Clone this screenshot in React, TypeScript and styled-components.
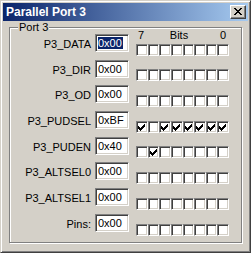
import React from "react";
import styled, { createGlobalStyle } from "styled-components";

const Global = createGlobalStyle`
  html, body { margin: 0; padding: 0; background: #d4d0c8; }
  body { font-family: "Liberation Sans", Arial, sans-serif; }
`;

const Window = styled.div`
  box-sizing: border-box;
  width: 251px;
  height: 253px;
  background: #d4d0c8;
  border: 1px solid;
  border-color: #d4d0c8 #404040 #404040 #d4d0c8;
  box-shadow: inset 1px 1px #ffffff, inset -1px -1px #808080;
  padding: 2px;
  display: flex;
  flex-direction: column;
`;

const TitleBar = styled.div`
  height: 18px;
  background: linear-gradient(to right, #0a246a, #a6caf0);
  display: flex;
  align-items: center;
  justify-content: space-between;
  padding: 0 2px 0 3px;
`;

const Title = styled.span`
  color: #ffffff;
  font: bold 12px "Liberation Sans", Arial, sans-serif;
  line-height: 18px;
`;

const CloseButton = styled.div`
  box-sizing: border-box;
  width: 16px;
  height: 14px;
  background: #d4d0c8;
  border: 1px solid;
  border-color: #ffffff #404040 #404040 #ffffff;
  box-shadow: inset -1px -1px #808080;
  display: flex;
  align-items: center;
  justify-content: center;
  padding: 0 1px 1px 0;
`;

const Body = styled.div`
  padding: 6px 6px 0 6px;
`;

const Group = styled.div`
  position: relative;
  box-sizing: border-box;
  width: 233px;
  height: 216px;
  border: 1px solid #808080;
  box-shadow: inset 1px 1px #ffffff, 1px 1px #ffffff;
  padding: 2px 0 0 0;
`;

const Caption = styled.span`
  position: absolute;
  top: -7px;
  left: 8px;
  padding: 0 1px;
  background: #d4d0c8;
  font-size: 11px;
  line-height: 13px;
  color: #000;
`;

const Grid = styled.div`
  display: grid;
  grid-template-columns: 81px 34px 96px;
  grid-auto-rows: 25.7px;
  column-gap: 4px;
`;

const Label = styled.div`
  font-size: 11px;
  line-height: 13px;
  color: #000;
  text-align: right;
  padding-top: 8px;
  white-space: nowrap;
`;

const Edit = styled.div`
  box-sizing: border-box;
  margin-top: 4px;
  width: 34px;
  height: 18px;
  background: #ffffff;
  border: 1px solid;
  border-color: #808080 #ffffff #ffffff #808080;
  box-shadow: inset 1px 1px #404040, inset -1px -1px #d4d0c8;
  padding: 2px 0 0 2px;
  font-size: 11px;
  line-height: 13px;
  color: #000;
`;

const EditText = styled.span<{ $selected?: boolean }>`
  background: ${(p) => (p.$selected ? "#0a246a" : "transparent")};
  color: ${(p) => (p.$selected ? "#ffffff" : "#000000")};
  padding: 0 1px 0 0;
`;

const Bits = styled.div`
  margin-left: 3px;
  display: flex;
  flex-direction: column;
  justify-content: flex-end;
  position: relative;
`;

const BitHeader = styled.div`
  position: absolute;
  top: 0;
  left: 0;
  right: 0;
  display: grid;
  grid-template-columns: 1fr auto 1fr;
  padding: 0 3px 0 2px;
  font-size: 11px;
  line-height: 11px;
  color: #000;
`;

const HeadRight = styled.span`
  text-align: right;
`;

const HeadMid = styled.span`
  margin-right: 6px;
`;

const Boxes = styled.div`
  display: flex;
  margin-top: 12px;
`;

const Check = styled.div`
  box-sizing: border-box;
  width: 12px;
  height: 12px;
  background: #ffffff;
  border: 1px solid;
  border-color: #808080 #ffffff #ffffff #808080;
  box-shadow: inset 1px 1px #404040, inset -1px -1px #d4d0c8;
  padding: 2px 0 0 1px;
`;

const CheckMark = () => (
  <svg width="7" height="7" viewBox="0 0 7 7" shapeRendering="crispEdges" style={{ display: "block" }}>
    {[2, 3, 4, 3, 2, 1, 0].map((y, x) => (
      <rect key={x} x={x} y={y} width="1" height="3" fill="#000" />
    ))}
  </svg>
);

const CloseGlyph = () => {
  const rows = [
    [0, 1, 6, 7],
    [1, 2, 5, 6],
    [2, 3, 4, 5],
    [3, 4],
    [2, 3, 4, 5],
    [1, 2, 5, 6],
    [0, 1, 6, 7],
  ];
  return (
    <svg width="8" height="7" viewBox="0 0 8 7" shapeRendering="crispEdges" style={{ display: "block" }}>
      {rows.flatMap((xs, y) => xs.map((x) => <rect key={`${x}-${y}`} x={x} y={y} width="1" height="1" fill="#000" />))}
    </svg>
  );
};

const regs = [
  { name: "P3_DATA", value: 0x00, selected: true },
  { name: "P3_DIR", value: 0x00 },
  { name: "P3_OD", value: 0x00 },
  { name: "P3_PUDSEL", value: 0xbf },
  { name: "P3_PUDEN", value: 0x40 },
  { name: "P3_ALTSEL0", value: 0x00 },
  { name: "P3_ALTSEL1", value: 0x00 },
  { name: "Pins:", value: 0x00 },
];

const hex = (v: number) => "0x" + v.toString(16).toUpperCase().padStart(2, "0");

export default function App() {
  return (
    <>
      <Global />
      <Window>
        <TitleBar>
          <Title>Parallel Port 3</Title>
          <CloseButton>
            <CloseGlyph />
          </CloseButton>
        </TitleBar>
        <Body>
          <Group>
            <Caption>Port 3</Caption>
            <Grid>
              {regs.map((r, i) => (
                <React.Fragment key={r.name}>
                  <Label>{r.name}</Label>
                  <Edit>
                    <EditText $selected={r.selected}>{hex(r.value)}</EditText>
                  </Edit>
                  <Bits>
                    {i === 0 && (
                      <BitHeader>
                        <span>7</span>
                        <HeadMid>Bits</HeadMid>
                        <HeadRight>0</HeadRight>
                      </BitHeader>
                    )}
                    <Boxes>
                      {[7, 6, 5, 4, 3, 2, 1, 0].map((b) => (
                        <Check key={b}>{(r.value >> b) & 1 ? <CheckMark /> : null}</Check>
                      ))}
                    </Boxes>
                  </Bits>
                </React.Fragment>
              ))}
            </Grid>
          </Group>
        </Body>
      </Window>
    </>
  );
}
